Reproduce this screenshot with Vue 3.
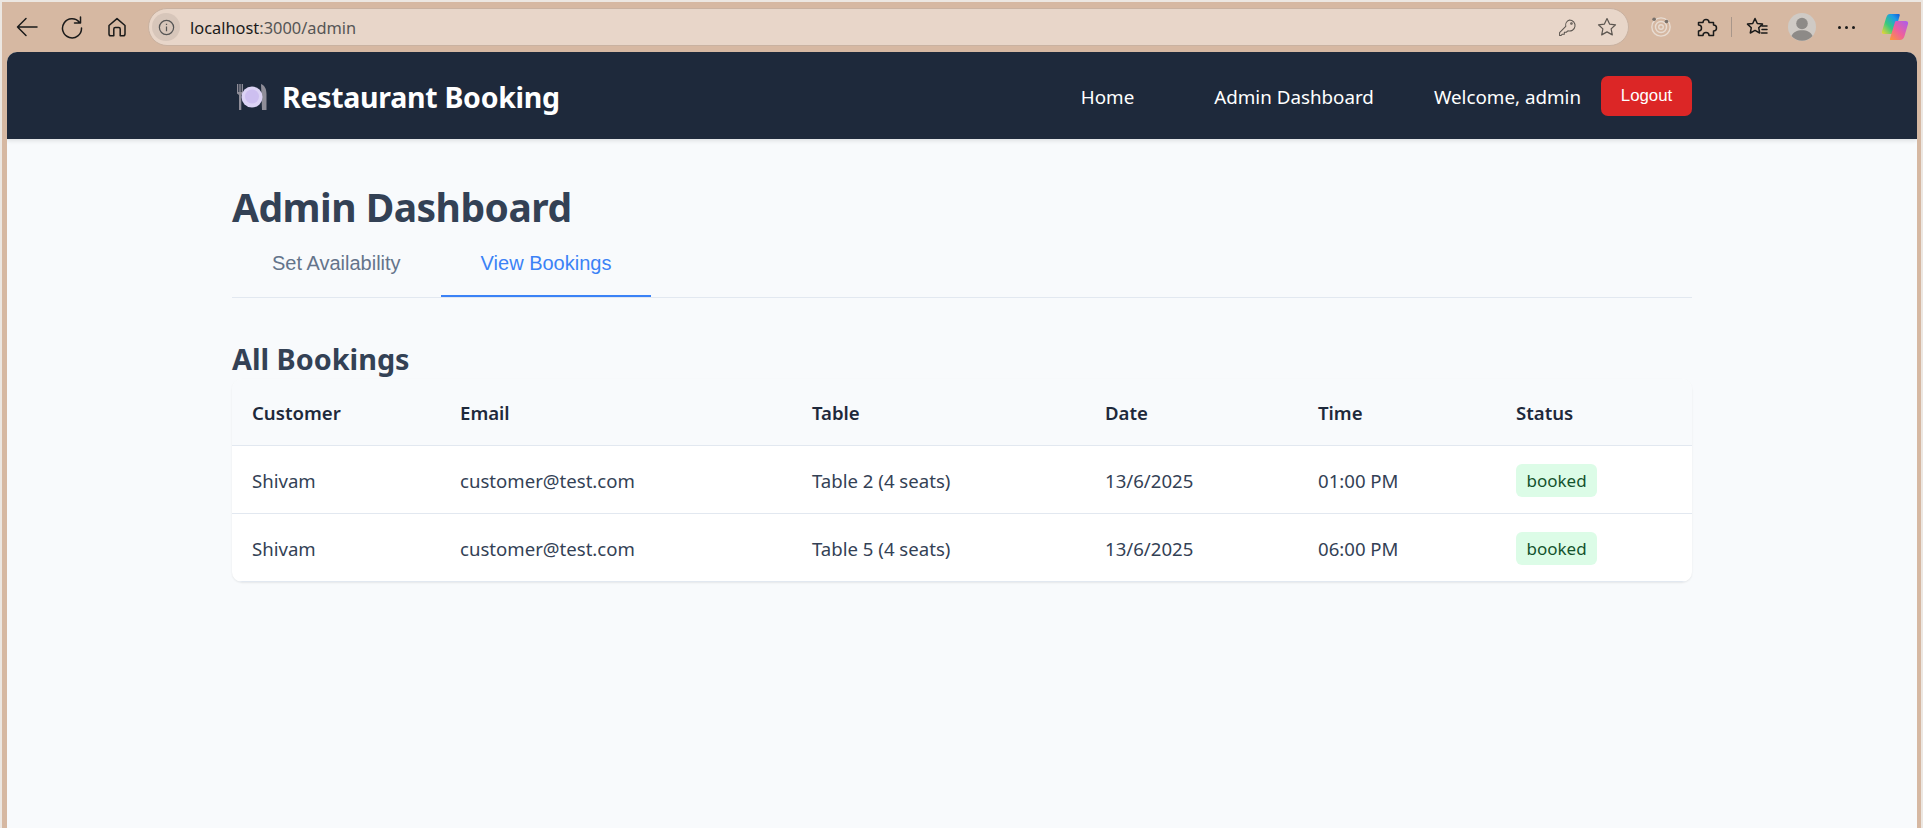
<template>
  <div class="window">
    <!-- Browser toolbar -->
    <div class="toolbar">
      <div class="tb-nav">
        <svg class="tb-icon back" viewBox="0 0 24 24"><path d="M22 12H2.500M11 3.500 2.500 12l8.500 8.500" /></svg>
        <svg class="tb-icon reload" viewBox="0 0 24 24"><path d="M19.500 7.500A9.500 9.500 0 1 0 21.500 13M20.500 2v6h-6" /></svg>
        <svg class="tb-icon home" viewBox="0 0 24 24"><path d="M4 10.500 12 3.600l8 6.900V19a1.800 1.800 0 0 1-1.800 1.800h-3V14a1.500 1.500 0 0 0-1.500-1.500h-3.400A1.500 1.500 0 0 0 8.800 14v6.800h-3A1.800 1.800 0 0 1 4 19z" /></svg>
      </div>
      <div class="addressbar">
        <span class="site-info">
          <svg viewBox="0 0 20 20"><circle cx="10" cy="10" r="7.500" /><path d="M10 9v5M10 6v1.300" /></svg>
        </span>
        <span class="url"><span class="url-host">localhost</span>:3000/admin</span>
        <svg class="addr-icon key" viewBox="0 0 24 24"><path d="M14.500 2.500a7 7 0 1 1-2 13.700L10.500 18H8v2.500H5.500L4 22H2v-3.500l7.800-7.800a7 7 0 0 1 4.700-8.200z" /><circle cx="17" cy="7" r="1" /></svg>
        <svg class="addr-icon star" viewBox="0 0 24 24"><path d="m12 2.800 2.800 6 6.500.8-4.800 4.500 1.300 6.500L12 17.300l-5.800 3.300 1.300-6.500-4.800-4.500 6.500-.8z" /></svg>
      </div>
      <div class="tb-right">
        <svg class="radar" viewBox="0 0 24 24">
          <circle cx="12" cy="12" r="10" />
          <circle cx="12" cy="12" r="6" />
          <circle cx="12" cy="12" r="2.500" />
          <circle class="dot" cx="4.500" cy="3.500" r="2" />
          <circle class="dot" cx="18" cy="6" r="2" />
        </svg>
        <svg class="tb-icon puzzle" viewBox="0 0 24 24"><path d="M4.500 7.500H9a3 3 0 1 1 6 0h4.500V10a3 3 0 1 1 0 6v4.500H15a3 3 0 1 0-6 0H4.500V16a3 3 0 1 0 0-6z" /></svg>
        <span class="divider"></span>
        <svg class="tb-icon favs" viewBox="0 0 24 24"><path d="m10 3.500 2.300 5 5.200.6-3.800 3.600 1 5.300-4.700-2.600-4.700 2.600 1-5.300L2.500 9.100l5.200-.6zM17 11h5M17 14.500h5M16.500 18h5.500" /></svg>
        <svg class="avatar" viewBox="0 0 28 28">
          <circle class="avatar-bg" cx="14" cy="14" r="14" />
          <circle class="avatar-fg" cx="14" cy="10.500" r="5.800" />
          <path class="avatar-fg" d="M3.500 23c1.500-4 5.500-5.800 10.500-5.800S23 19 24.500 23a14 14 0 0 1-21 0z" />
        </svg>
        <span class="more"><i></i><i></i><i></i></span>
        <svg class="copilot" viewBox="0 0 28 28">
          <defs>
            <linearGradient id="cpA" x1="0" y1="1" x2="1" y2="0">
              <stop offset="0" stop-color="#f5d431" />
              <stop offset=".4" stop-color="#38c97f" />
              <stop offset=".75" stop-color="#1e9be8" />
              <stop offset="1" stop-color="#1558d6" />
            </linearGradient>
            <linearGradient id="cpB" x1="1" y1="0" x2="0" y2="1">
              <stop offset="0" stop-color="#a85cf0" />
              <stop offset=".55" stop-color="#f0609a" />
              <stop offset="1" stop-color="#fb9a35" />
            </linearGradient>
          </defs>
          <path fill="url(#cpA)" d="M9 1h8.500c1 0 1.500.6 1.200 1.600L14 19c-.5 1.500-1.500 2-3 2H3c-1.800 0-2.600-1-2-2.800l4-13C5.800 2.500 7 1 9 1z" />
          <path fill="url(#cpB)" d="M15 8h9.500c2 0 3 1 2.500 3l-3.500 12c-.8 2.500-2.300 4-4.500 4h-9c-1 0-1.400-.6-1-1.600L14 9c.2-.6.500-1 1-1z" />
        </svg>
      </div>
    </div>

    <!-- Page -->
    <div class="page">
      <nav class="navbar">
        <div class="navbar-inner">
          <a class="brand">
            <svg class="brand-icon" viewBox="0 0 30 26">
              <path class="cutlery" d="M0 0h1.300v8h1V0h1.400v8h1V0H6v9.500L4.300 11v15H2V11L0 9.500zM24 0c3 1 5.500 4 5.500 10v16H25z" />
              <circle class="plate-out" cx="15" cy="13" r="10.500" />
              <circle class="plate-in" cx="15" cy="12.500" r="7" />
            </svg>
            Restaurant Booking
          </a>
          <div class="nav-links">
            <a>Home</a>
            <a>Admin Dashboard</a>
            <span class="welcome">Welcome, admin</span>
            <button class="logout">Logout</button>
          </div>
        </div>
      </nav>

      <main class="content">
        <h1>Admin Dashboard</h1>
        <div class="tabs">
          <button v-for="t in tabs" :key="t" class="tab" :class="{ active: t === activeTab }" @click="activeTab = t">{{ t }}</button>
        </div>

        <h2>All Bookings</h2>
        <table class="bookings">
          <thead>
            <tr>
              <th class="col-customer">Customer</th>
              <th class="col-email">Email</th>
              <th class="col-table">Table</th>
              <th class="col-date">Date</th>
              <th class="col-time">Time</th>
              <th class="col-status">Status</th>
            </tr>
          </thead>
          <tbody>
            <tr v-for="b in bookings" :key="b.table">
              <td>{{ b.customer }}</td>
              <td>{{ b.email }}</td>
              <td>{{ b.table }}</td>
              <td>{{ b.date }}</td>
              <td>{{ b.time }}</td>
              <td><span class="status">{{ b.status }}</span></td>
            </tr>
          </tbody>
        </table>
      </main>
    </div>
  </div>
</template>

<script setup>
import { ref } from 'vue'

const tabs = ['Set Availability', 'View Bookings']
const activeTab = ref('View Bookings')

const bookings = [
  { customer: 'Shivam', email: 'customer@test.com', table: 'Table 2 (4 seats)', date: '13/6/2025', time: '01:00 PM', status: 'booked' },
  { customer: 'Shivam', email: 'customer@test.com', table: 'Table 5 (4 seats)', date: '13/6/2025', time: '06:00 PM', status: 'booked' }
]
</script>

<style>
html, body {
  margin: 0;
  height: 100%;
  overflow: hidden;
}
</style>

<style scoped>
.window {
  height: 828px;
  box-sizing: border-box;
  background: #d6b8a2;
  border: 2px solid #ece7e2;
  border-bottom: none;
  display: flex;
  flex-direction: column;
  font-family: "Noto Sans", "Open Sans", sans-serif;
  overflow: hidden;
}

.toolbar {
  height: 50px;
  flex: none;
  display: flex;
  align-items: center;
  padding-left: 13px;
}

.tb-nav {
  display: flex;
  align-items: center;
  gap: 21px;
  margin-right: 19px;
}

.tb-icon {
  width: 24px;
  height: 24px;
  fill: none;
  stroke: #1a1a1a;
  stroke-width: 1.500;
  stroke-linejoin: round;
  stroke-linecap: round;
}

.addressbar {
  flex: none;
  width: 1481px;
  height: 38px;
  box-sizing: border-box;
  background: #e8d6c9;
  border: 1px solid #c9b2a1;
  border-radius: 19px;
  display: flex;
  align-items: center;
  padding-right: 10px;
}

.site-info {
  width: 28px;
  height: 28px;
  margin-left: 3px;
  border-radius: 50%;
  background: #d7c6ba;
  display: flex;
  align-items: center;
  justify-content: center;
}

.site-info svg {
  width: 19px;
  height: 19px;
  fill: none;
  stroke: #555;
  stroke-width: 1.300;
}

.url {
  margin-left: 10px;
  font-size: 16.400px;
  color: #555;
  flex: 1;
}

.url-host {
  color: #1a1a1a;
}

.addr-icon {
  width: 22px;
  height: 22px;
  fill: none;
  stroke: #5c5650;
  stroke-width: 1.300;
  stroke-linejoin: round;
}

.key {
  width: 19px;
  height: 19px;
  margin-right: 19px;
}

.tb-right {
  flex: 1;
  display: flex;
  align-items: center;
}

.radar {
  width: 22px;
  height: 22px;
  margin-left: 21px;
  fill: none;
  stroke: #e8dcd2;
  stroke-width: 1.500;
}

.radar .dot {
  fill: #77706a;
  stroke: none;
}

.puzzle {
  margin-left: 22px;
}

.divider {
  width: 1px;
  height: 20px;
  background: #a8968a;
  margin: 0 13px;
}

.avatar {
  width: 28px;
  height: 28px;
  margin-left: 19px;
}

.avatar-bg {
  fill: #cfcac5;
}

.avatar-fg {
  fill: #8d8a87;
}

.more {
  display: flex;
  gap: 4px;
  margin-left: 22px;
}

.more i {
  width: 3px;
  height: 3px;
  border-radius: 50%;
  background: #1a1a1a;
}

.copilot {
  width: 28px;
  height: 28px;
  margin-left: 26px;
}

.page {
  flex: 1;
  margin: 0 4px 0 5px;
  background: #f8fafc;
  border-radius: 10px 10px 0 0;
  overflow: hidden;
}

.navbar {
  height: 87px;
  background: #1e293b;
  box-shadow: 0 2px 4px rgba(0, 0, 0, 0.1);
}

.navbar-inner {
  width: 1460px;
  height: 100%;
  margin-left: 225px;
  display: flex;
  align-items: center;
  justify-content: space-between;
}

.brand {
  display: flex;
  align-items: center;
  gap: 15px;
  margin-left: 5px;
  padding-top: 2px;
  color: #fff;
  font-size: 28.500px;
  letter-spacing: -0.280px;
  font-weight: 700;
}

.brand-icon {
  width: 30px;
  height: 26px;
}

.cutlery {
  fill: #8f8d98;
}

.plate-out {
  fill: #dcd3f5;
}

.plate-in {
  fill: #cdbff0;
}

.nav-links {
  display: flex;
  align-items: center;
  color: #fff;
  font-size: 18.800px;
}

.nav-links a,
.welcome {
  padding-top: 2px;
}

.nav-links a {
  margin-right: 80px;
}

.nav-links a:nth-child(2) {
  margin-right: 60px;
}

.welcome {
  margin-right: 20px;
}

.logout {
  width: 91px;
  height: 40px;
  padding: 0;
  border: none;
  border-radius: 7px;
  background: #dc2626;
  color: #fff;
  font-family: "Liberation Sans", Arial, sans-serif;
  font-size: 16.800px;
}

.content {
  width: 1460px;
  margin-left: 225px;
  padding-top: 46px;
}

h1 {
  margin: 0;
  height: 44px;
  line-height: 44px;
  font-size: 39px;
  letter-spacing: -0.520px;
  font-weight: 700;
  color: #334155;
}

.tabs {
  display: flex;
  height: 68px;
  border-bottom: 1px solid #e2e8f0;
}

.tab {
  box-sizing: border-box;
  padding: 2px 40px 0;
  height: 68px;
  background: none;
  border: none;
  border-bottom: 2px solid transparent;
  font-family: "Liberation Sans", Arial, sans-serif;
  font-size: 20px;
  color: #64748b;
  cursor: pointer;
}

.tab.active {
  color: #3b82f6;
  border-bottom-color: #3b82f6;
}

h2 {
  margin: 40px 0 0;
  height: 41px;
  line-height: 42px;
  font-size: 28.800px;
  font-weight: 700;
  color: #334155;
}

.bookings {
  width: 100%;
  table-layout: fixed;
  border-collapse: separate;
  border-spacing: 0;
  background: #fff;
  border-radius: 10px;
  box-shadow: 0 1px 2px rgba(0, 0, 0, 0.08);
  overflow: hidden;
  font-size: 18.600px;
}

th {
  height: 67px;
  box-sizing: border-box;
  padding: 0 20px;
  text-align: left;
  background: #f8fafc;
  color: #1e293b;
  font-weight: 600;
  border-bottom: 1px solid #e2e8f0;
}

td {
  height: 68px;
  box-sizing: border-box;
  padding: 1px 20px 0;
  color: #334155;
  border-bottom: 1px solid #e2e8f0;
}

.col-customer { width: 208px; }
.col-email { width: 352px; }
.col-table { width: 293px; }
.col-date { width: 213px; }
.col-time { width: 198px; }
.col-status { width: 196px; }

.status {
  display: inline-block;
  padding: 3px 10.500px;
  border-radius: 6px;
  background: #dcfce7;
  color: #14532d;
  font-size: 17px;
  line-height: 27px;
  vertical-align: middle;
}
</style>
